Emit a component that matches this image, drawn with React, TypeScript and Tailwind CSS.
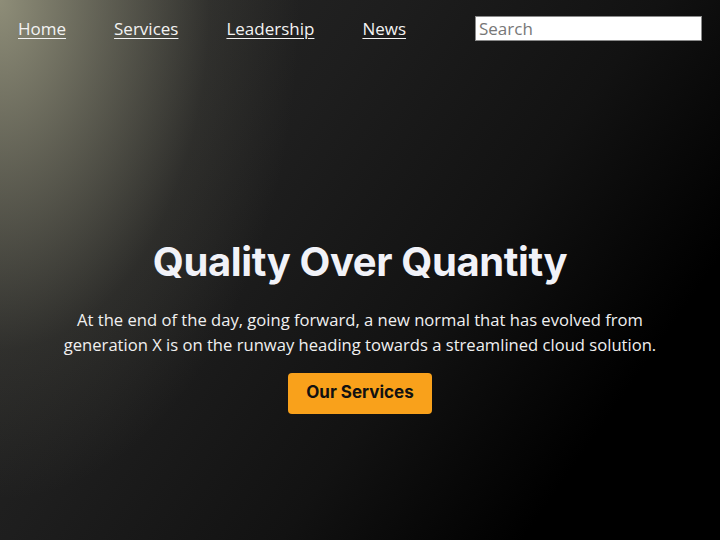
import React from 'react';

const links = ['Home', 'Services', 'Leadership', 'News'];

function App() {
  return (
    <div className="min-h-[540px] w-full bg-[radial-gradient(ellipse_300px_500px_at_0_0,rgba(142,141,120,1)_0%,rgba(142,141,120,0.55)_35%,rgba(142,141,120,0.12)_70%,rgba(142,141,120,0)_100%),linear-gradient(125deg,#2b2b2a_0%,#1e1e1e_35%,#121212_60%,#000_82%,#000_100%)] font-['Open_Sans',sans-serif] text-white">
      <nav className="flex items-center justify-between pl-[18px] pr-[18px] pt-[16px]">
        <ul className="flex items-center gap-12 text-[17px]">
          {links.map((l) => (
            <li key={l}>
              <a href="#" className="underline underline-offset-[3px] decoration-1 text-[#f3f3f3]">
                {l}
              </a>
            </li>
          ))}
        </ul>
        <input
          type="text"
          placeholder="Search"
          className="w-[227px] h-[25px] bg-white border border-[#8a8a8a] px-[3px] text-[17px] text-black placeholder-[#777] outline-none"
        />
      </nav>

      <section className="flex flex-col items-center text-center pt-[195px]">
        <h1 className="font-['Inter',sans-serif] font-bold text-[40px] leading-[50px] tracking-[-0.4px] text-[#f1f2f8]">
          Quality Over Quantity
        </h1>
        <p className="mt-[20px] max-w-[600px] text-[16.6px] leading-[25px] text-[#f0f0f0]">
          At the end of the day, going forward, a new normal that has evolved from generation X is on the runway heading towards a streamlined cloud solution.
        </p>
        <button
          type="button"
          className="mt-[16px] w-[144px] h-[41px] rounded-[4px] bg-[#f9a11b] font-['Inter',sans-serif] font-bold text-[17px] text-[#111]"
        >
          Our Services
        </button>
      </section>
    </div>
  );
}

export default App;
